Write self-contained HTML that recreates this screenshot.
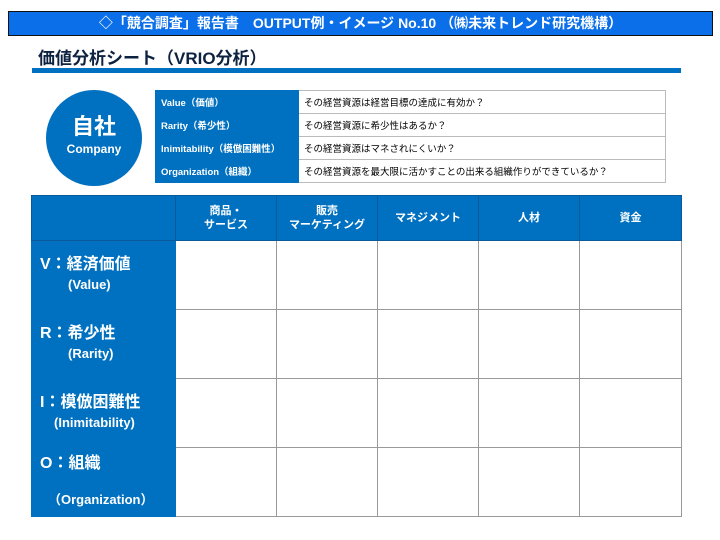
<!DOCTYPE html>
<html><head><meta charset="utf-8"><style>
body{margin:0;width:720px;height:540px;background:#fff;position:relative;font-family:"Liberation Sans","Noto Sans CJK JP",sans-serif;overflow:hidden}
.hd{position:absolute;left:8px;top:11px;width:703px;height:23px;background:#0a6fe8;border:1px solid #111;color:#fff;font-weight:bold;font-size:14px;text-align:center;line-height:23px}
.tt{position:absolute;left:38px;top:44px;font-size:17px;font-weight:bold;color:#0d2240}
.rule{position:absolute;left:32px;top:68px;width:649px;height:5px;background:#0070c0}
.circ{position:absolute;left:46px;top:90px;width:96px;height:96px;border-radius:50%;background:#0070c0;color:#fff;text-align:center;font-weight:bold}
table{border-collapse:collapse;position:absolute;table-layout:fixed}
.t1{left:155px;top:90px;width:511px;font-size:9.5px}
.t1 td{height:22px;border:1px solid #bbb;padding:0 0 0 5px}
.t1 td.k{background:#0070c0;color:#fff;font-weight:bold;border-color:#0070c0}
.t2{left:31px;top:195px;width:650px}
.t2 th,.t2 td{padding:0}
.t2 th{background:#0070c0;color:#fff;font-size:11px;height:44px;border:1px solid #0a5a9a;font-weight:bold;line-height:14px}
.t2 td{border:1px solid #999;height:68px}
.t2 td.k{background:#0070c0;color:#fff;font-weight:bold;border-color:#0070c0;font-size:16px;padding-left:8px;line-height:20px}
.t2 td.k span{font-size:13px;display:block;padding-left:28px}
</style></head><body>
<div class="hd">◇「競合調査」報告書　OUTPUT例・イメージ No.10 （㈱未来トレンド研究機構）</div>
<div class="tt">価値分析シート（VRIO分析）</div>
<div class="rule"></div>
<div class="circ"><div style="font-size:22px;margin-top:24px;line-height:26px">自社</div><div style="font-size:12px;margin-top:2px">Company</div></div>
<table class="t1"><colgroup><col style="width:143px"><col></colgroup>
<tr><td class="k">Value（価値）</td><td>その経営資源は経営目標の達成に有効か？</td></tr>
<tr><td class="k">Rarity（希少性）</td><td>その経営資源に希少性はあるか？</td></tr>
<tr><td class="k">Inimitability（模倣困難性）</td><td>その経営資源はマネされにくいか？</td></tr>
<tr><td class="k">Organization（組織）</td><td>その経営資源を最大限に活かすことの出来る組織作りができているか？</td></tr>
</table>
<table class="t2"><colgroup><col style="width:144px"><col style="width:101px"><col style="width:101px"><col style="width:101px"><col style="width:101px"><col style="width:102px"></colgroup>
<tr><th></th><th>商品・<br>サービス</th><th>販売<br>マーケティング</th><th>マネジメント</th><th>人材</th><th>資金</th></tr>
<tr><td class="k">V：経済価値<span>(Value)</span></td><td></td><td></td><td></td><td></td><td></td></tr>
<tr><td class="k">R：希少性<span>(Rarity)</span></td><td></td><td></td><td></td><td></td><td></td></tr>
<tr><td class="k">I：模倣困難性<span style="padding-left:14px">(Inimitability)</span></td><td></td><td></td><td></td><td></td><td></td></tr>
<tr><td class="k">O：組織<span style="padding-left:8px;margin-top:16px">（Organization）</span></td><td></td><td></td><td></td><td></td><td></td></tr>
</table>
</body></html>
